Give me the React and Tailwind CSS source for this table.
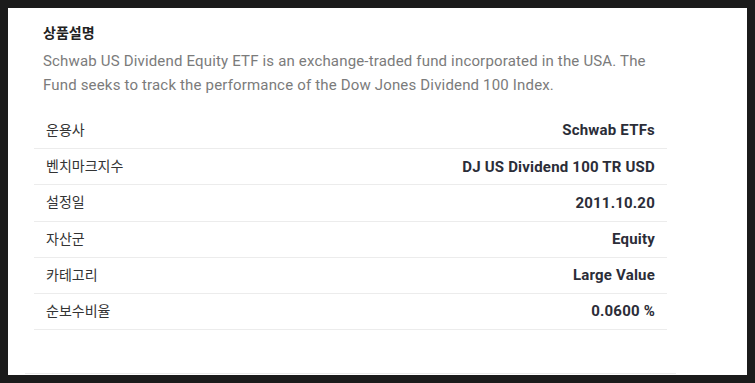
import React from 'react';

const rows = [
    { label: '운용사', value: 'Schwab ETFs' },
    { label: '벤치마크지수', value: 'DJ US Dividend 100 TR USD' },
    { label: '설정일', value: '2011.10.20' },
    { label: '자산군', value: 'Equity' },
    { label: '카테고리', value: 'Large Value' },
    { label: '순보수비율', value: '0.0600 %' },
];

const font = { fontFamily: 'Roboto, "Noto Sans CJK KR", sans-serif' };

const App = () => {
    return (
        <div className="w-[755px] h-[383px] bg-[#1b1b1b] p-[8px]" style={font}>
            <div className="h-[367px] bg-white">
                <div className="mx-[17px] w-[651px] px-[9px] pt-[15px] pb-[43px] border-b border-[#ebebeb]">
                    <h3 className="px-[9px] text-[14px] leading-[20px] font-bold text-[#222]">상품설명</h3>
                    <p className="mt-[6px] px-[9px] text-[15px] tracking-[0.17px] leading-[24px] text-[#7b7b7b]">
                        Schwab US Dividend Equity ETF is an exchange-traded fund incorporated in the USA. The Fund seeks to track the performance of the Dow Jones Dividend 100 Index.
                    </p>

                    <div className="mt-[16px]">
                        {rows.map((row) => (
                            <div
                                key={row.label}
                                className="h-[36.2px] flex items-center justify-between px-[12px] border-b border-[#ececec]"
                            >
                                <span className="text-[14px] text-[#333]">{row.label}</span>
                                <span className="text-[15px] tracking-[0.2px] font-bold text-[#2b2d38]">{row.value}</span>
                            </div>
                        ))}
                    </div>
                </div>
            </div>
        </div>
    );
};

export default App;
